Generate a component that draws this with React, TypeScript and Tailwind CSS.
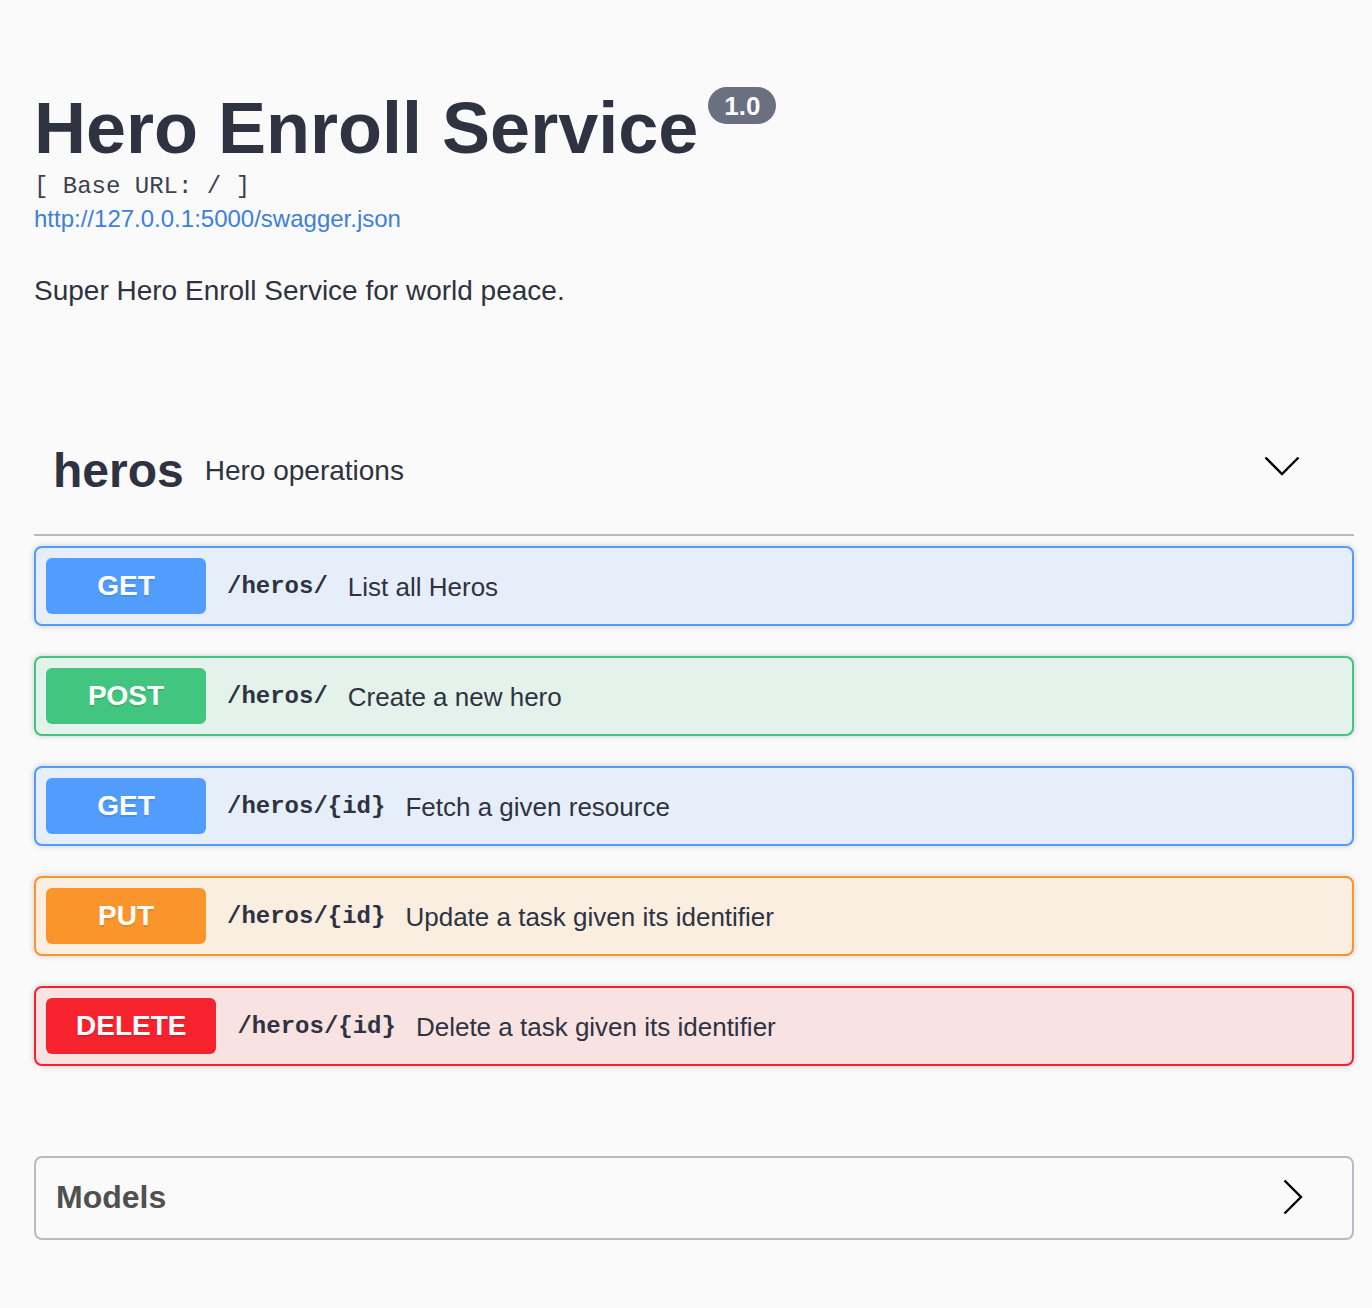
import React from "react";

type Op = {
  method: string;
  path: string;
  desc: string;
  border: string;
  bg: string;
  badge: string;
};

const ops: Op[] = [
  { method: "GET", path: "/heros/", desc: "List all Heros", border: "border-[#519dfd]", bg: "bg-[#e6eff9]", badge: "bg-[#519dfd]" },
  { method: "POST", path: "/heros/", desc: "Create a new hero", border: "border-[#41c57f]", bg: "bg-[#e3f2ea]", badge: "bg-[#41c57f]" },
  { method: "GET", path: "/heros/{id}", desc: "Fetch a given resource", border: "border-[#519dfd]", bg: "bg-[#e6eff9]", badge: "bg-[#519dfd]" },
  { method: "PUT", path: "/heros/{id}", desc: "Update a task given its identifier", border: "border-[#f9952a]", bg: "bg-[#faeee1]", badge: "bg-[#f9952a]" },
  { method: "DELETE", path: "/heros/{id}", desc: "Delete a task given its identifier", border: "border-[#f6232f]", bg: "bg-[#f8e2e2]", badge: "bg-[#f6232f]" },
];

function OpRow({ op }: { op: Op }) {
  return (
    <div
      className={`mb-[30px] flex items-center rounded-[8px] border-2 p-[10px] shadow-[0_0_6px_rgba(0,0,0,0.19)] ${op.border} ${op.bg}`}
    >
      <span
        className={`min-w-[160px] rounded-[6px] px-[30px] py-[12px] text-center text-[28px] font-bold leading-[32px] text-white [text-shadow:0_2px_0_rgba(0,0,0,0.1)] ${op.badge}`}
      >
        {op.method}
      </span>
      <span className="pl-[21px] pr-[20px] pt-[2px] font-['Liberation_Mono',monospace] text-[24px] font-bold leading-[32px] text-[#2f3241]">
        {op.path}
      </span>
      <span className="pt-[1px] text-[26px] leading-[32px] text-[#2f3241]">{op.desc}</span>
    </div>
  );
}

export default function App() {
  return (
    <div className="min-h-screen bg-[#fafafa] pl-[34px] pr-[18px] pb-[68px] font-['Liberation_Sans',Arial,sans-serif]">
      <div className="pt-[88px]">
        <div className="flex items-start">
          <h1 className="text-[72px] font-bold leading-[80px] text-[#2f3241]">Hero Enroll Service</h1>
          <span className="-mt-[1px] ml-[10px] h-[37px] rounded-full bg-[#6b7080] px-[16px] text-[26px] font-bold leading-[38px] text-[#fafafa]">
            1.0
          </span>
        </div>
        <div className="mt-[5px] font-['Liberation_Mono',monospace] text-[24px] leading-[28px] text-[#3b4151]">
          [ Base URL: / ]
        </div>
        <a href="#" className="mt-[4px] block text-[24px] leading-[28px] text-[#3d80dd]">
          http://127.0.0.1:5000/swagger.json
        </a>
        <p className="mt-[42px] text-[28px] leading-[32px] text-[#2f3241]">
          Super Hero Enroll Service for world peace.
        </p>
      </div>

      <section className="mt-[136px]">
        <div className="flex items-center border-b-2 border-[#b9bbc1] pb-[35px] pl-[19px] pr-[54px]">
          <h4 className="text-[48px] font-bold leading-[56px] text-[#2f3241]">heros</h4>
          <span className="ml-[21px] text-[28px] leading-[32px] text-[#2f3241]">Hero operations</span>
          <div className="flex-1" />
          <svg width="36" height="20" viewBox="0 0 36 20" className="mb-[11px]" fill="none">
            <path d="M1.5 1.5 L18 18 L34.5 1.5" stroke="#000" strokeWidth="2.4" />
          </svg>
        </div>
        <div className="mt-[10px]">
          {ops.map((op, i) => (
            <OpRow key={i} op={op} />
          ))}
        </div>
      </section>

      <section className="mt-[90px] flex items-center rounded-[8px] border-2 border-[#b9bbc1] pb-[21px] pl-[20px] pr-[49px] pt-[19px]">
        <h4 className="flex-1 text-[32px] font-bold leading-[40px] text-[#505050]">Models</h4>
        <svg width="20" height="36" viewBox="0 0 20 36" fill="none">
          <path d="M1.5 1.5 L18 18 L1.5 34.5" stroke="#000" strokeWidth="2.4" />
        </svg>
      </section>
    </div>
  );
}
